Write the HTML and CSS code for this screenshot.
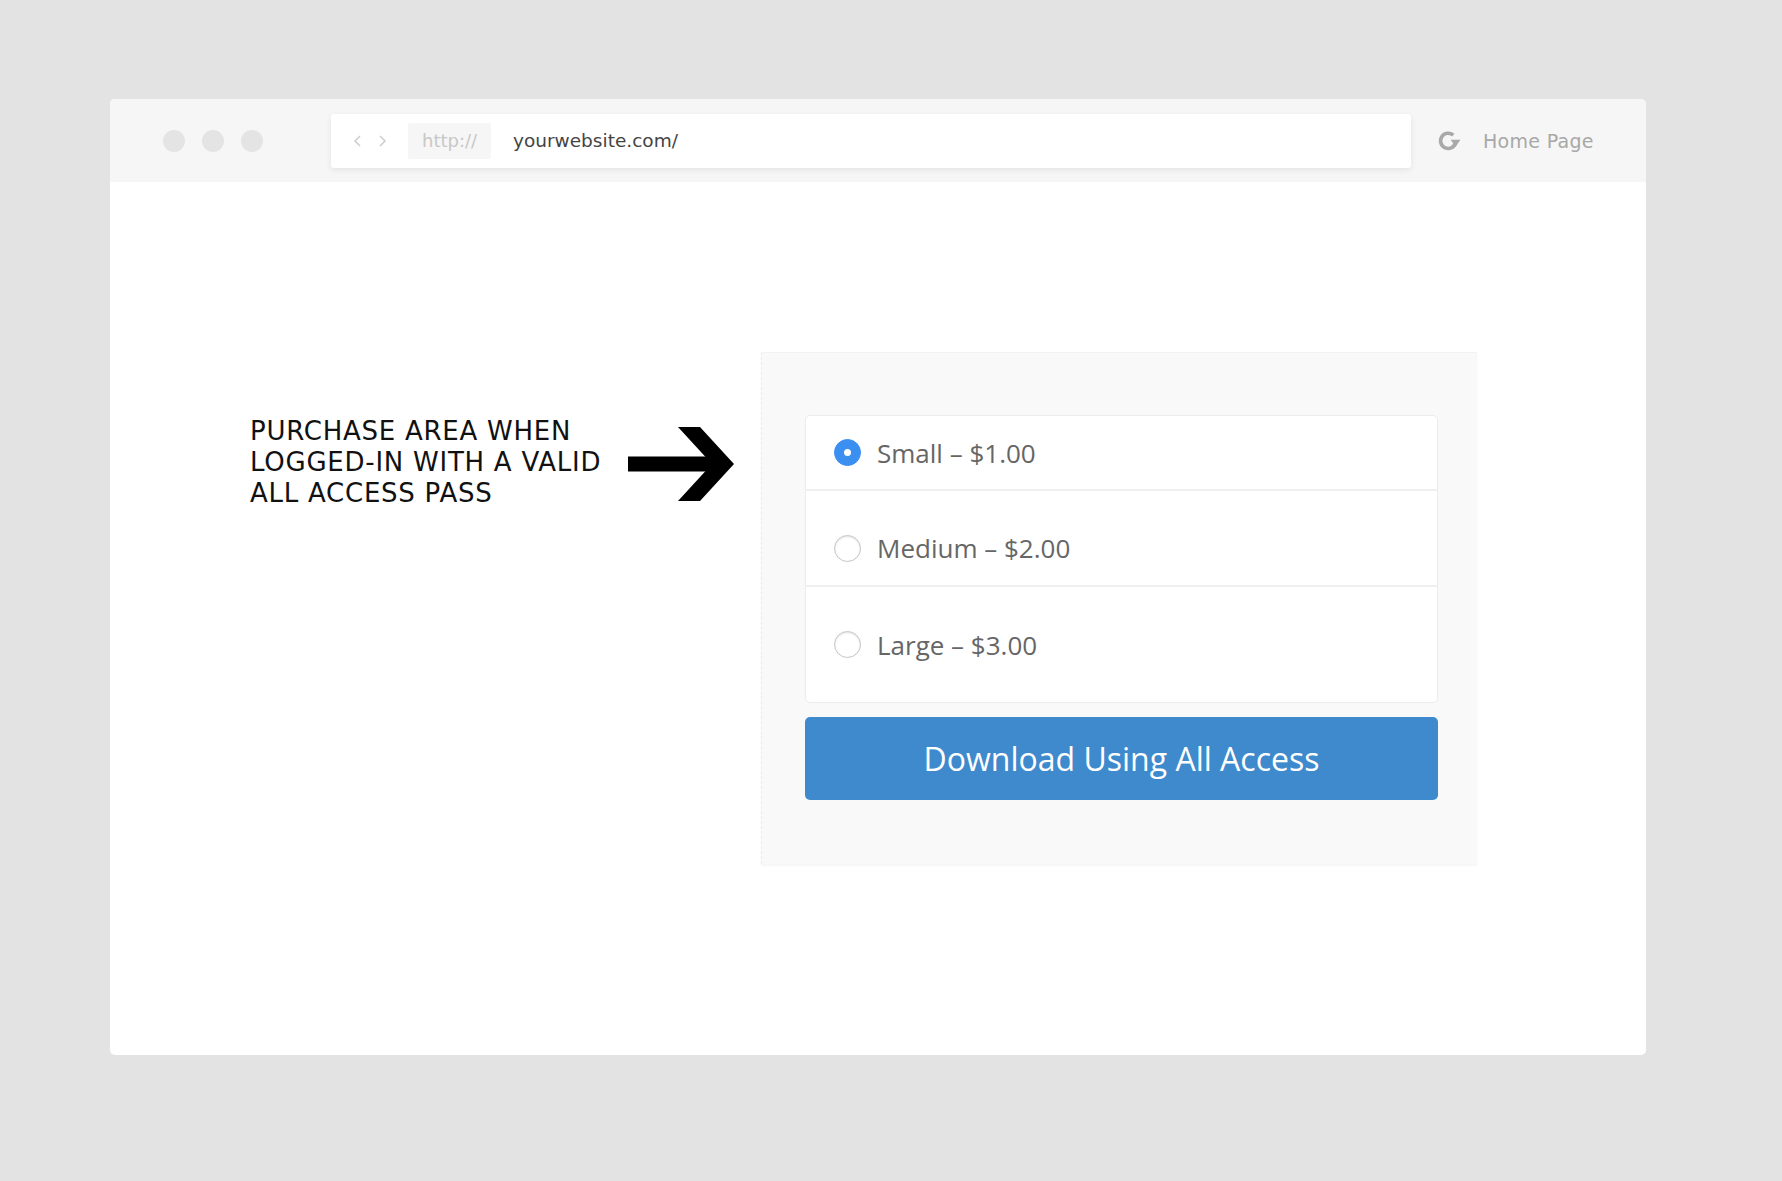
FILE: index.html
```html
<!DOCTYPE html>
<html>
<head>
<meta charset="utf-8">
<link rel="stylesheet" href="styles.css">
</head>
<body>
<div class="window">
  <div class="toolbar">
    <div class="dots"><span class="dot"></span><span class="dot"></span><span class="dot"></span></div>
    <div class="urlbar">
      <span class="nav">
        <svg width="10" height="14" viewBox="0 0 10 14"><path d="M7 2 L2 7 L7 12" fill="none" stroke="#cfcfcf" stroke-width="1.6"/></svg>
        <svg width="10" height="14" viewBox="0 0 10 14"><path d="M3 2 L8 7 L3 12" fill="none" stroke="#cfcfcf" stroke-width="1.6"/></svg>
      </span>
      <span class="proto">http://</span>
      <span class="url">yourwebsite.com/</span>
    </div>
    <svg class="refresh" width="24" height="22" viewBox="0 0 24 22"><path d="M16.3 5.2 A7.6 7.6 0 1 0 18.6 12.5" fill="none" stroke="#a9a9a9" stroke-width="3.6"/><path d="M13.6 9.8 L23.4 9.8 L18.6 16.8 Z" fill="#a9a9a9"/></svg>
    <span class="home">Home Page</span>
  </div>
  <div class="content">
    <div class="callout">
      <p class="note">PURCHASE AREA WHEN<br>LOGGED-IN WITH A VALID<br>ALL ACCESS PASS</p>
      <svg class="arrow" width="106" height="74" viewBox="0 0 106 74"><path d="M0 29.5 H90 V44.5 H0 Z" fill="#000"/><path d="M50 0 H72 L106 37 L72 74 H50 L84 37 Z" fill="#000"/></svg>
    </div>
    <div class="panel">
      <div class="options">
        <label class="opt first"><span class="radio checked"></span><span class="lbl">Small – $1.00</span></label>
        <label class="opt mid"><span class="radio"></span><span class="lbl">Medium – $2.00</span></label>
        <label class="opt last"><span class="radio"></span><span class="lbl">Large – $3.00</span></label>
      </div>
      <div class="btn">Download Using All Access</div>
    </div>
  </div>
</div>
</body>
</html>
```
FILE: styles.css
```css
html, body { margin: 0; padding: 0; }
body {
  background: #e3e3e3;
  width: 1782px;
  height: 1181px;
  padding: 99px 0 0 110px;
  box-sizing: border-box;
  font-family: "Open Sans", sans-serif;
}
.window {
  width: 1536px;
  height: 956px;
  background: #fff;
  border-radius: 5px;
  overflow: hidden;
}
.toolbar {
  height: 83px;
  background: #f6f6f6;
  display: flex;
  align-items: center;
}
.dots { display: flex; gap: 17px; margin-left: 53px; width: 168px; }
.dot { width: 22px; height: 22px; border-radius: 50%; background: #e4e4e4; }
.urlbar {
  width: 1080px;
  height: 54px;
  background: #fff;
  border-radius: 3px;
  box-shadow: 0 2px 6px rgba(0,0,0,0.08);
  display: flex;
  align-items: center;
  box-sizing: border-box;
  padding-left: 22px;
}
.nav { display: flex; gap: 14px; width: 55px; }
.proto {
  background: #f6f6f6;
  color: #c8c8c8;
  font-family: "DejaVu Sans", sans-serif;
  font-size: 18px;
  height: 36px;
  line-height: 36px;
  width: 83px;
  box-sizing: border-box;
  padding-left: 14px;
  border-radius: 2px;
}
.url {
  margin-left: 22px;
  font-family: "DejaVu Sans", sans-serif;
  font-size: 18.5px;
  color: #444;
}
.refresh { margin-left: 26px; }
.home {
  margin-left: 22px;
  font-family: "DejaVu Sans", sans-serif;
  font-size: 19px;
  letter-spacing: 0.3px;
  color: #a8a8a8;
}
.content { display: flex; align-items: flex-start; padding: 170px 0 0 140px; }
.callout { display: flex; align-items: center; width: 484px; margin-top: 64px; }
.note {
  margin: 0;
  width: 378px;
  font-family: "DejaVu Sans", sans-serif;
  font-size: 26px;
  letter-spacing: 0.75px;
  line-height: 31px;
  color: #111;
  white-space: nowrap;
}
.arrow { display: block; flex: none; margin-top: 2px; }
.panel {
  margin-left: 27px;
  width: 716px;
  height: 512px;
  box-sizing: border-box;
  background: #f9f9f9;
  border-left: 1px dashed #ececec;
  border-top: 1px solid #f2f2f2;
  box-shadow: 0 2px 2px rgba(0,0,0,0.04);
  padding: 62px 39px 0 43px;
}
.options {
  background: #fff;
  border: 1px solid #ececec;
  border-radius: 5px;
}
.opt {
  display: flex;
  align-items: center;
  padding-left: 28px;
  box-sizing: border-box;
}
.opt.first { height: 75px; border-bottom: 2px solid #efefef; }
.opt.mid { height: 96px; border-bottom: 2px solid #efefef; padding-top: 20px; }
.opt.last { height: 115px; }
.radio {
  width: 27px; height: 27px;
  border-radius: 50%;
  border: 1px solid #c4c4c4;
  background: #fff;
  box-shadow: inset 0 1px 2px rgba(0,0,0,0.12);
  box-sizing: border-box;
  margin-right: 16px;
  position: relative;
  flex: none;
}
.radio.checked {
  background: #3a8ff0;
  border-color: #3a8ff0;
  box-shadow: none;
}
.radio.checked::after {
  content: "";
  position: absolute;
  left: 9px; top: 9px;
  width: 7px; height: 7px;
  border-radius: 50%;
  background: #fff;
}
.lbl { font-size: 26px; color: #666; }
.btn {
  margin-top: 14px;
  height: 83px;
  background: #3e8acd;
  border-radius: 5px;
  color: #fff;
  font-size: 32px;
  display: flex;
  align-items: center;
  justify-content: center;
}
```
